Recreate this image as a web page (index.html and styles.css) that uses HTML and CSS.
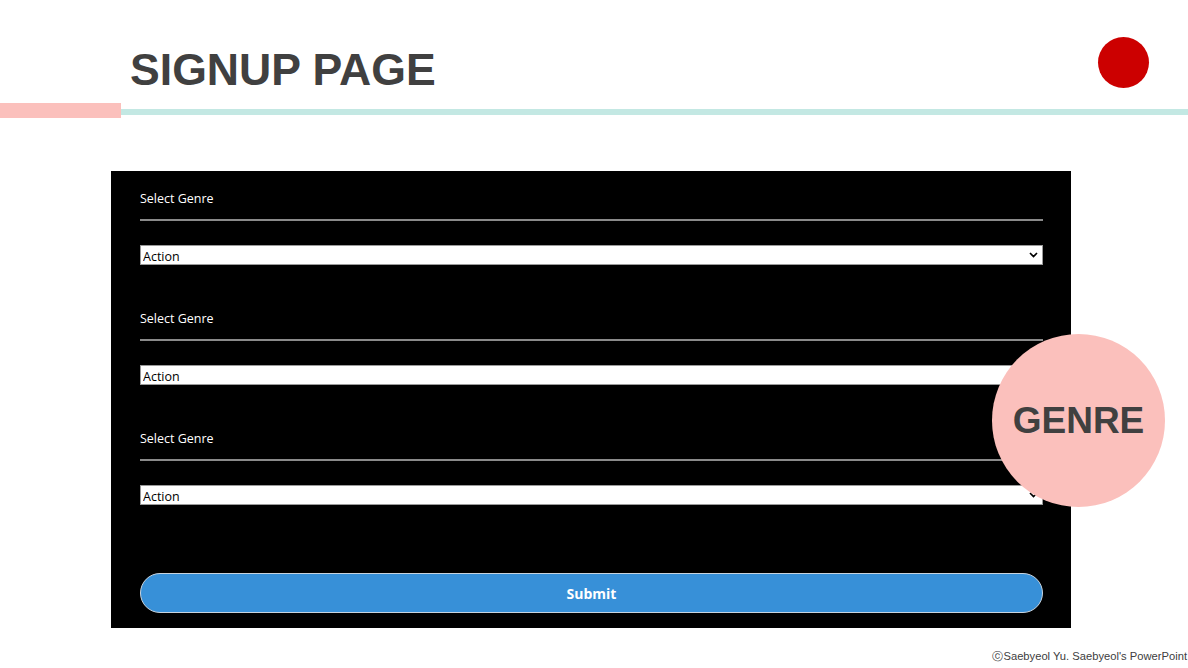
FILE: index.html
```html
<!DOCTYPE html>
<html lang="en">
<head>
<meta charset="utf-8">
<title>Signup Page</title>
<link rel="stylesheet" href="styles.css">
</head>
<body>
<div class="slide">
  <header class="header">
    <h1 class="title">SIGNUP PAGE</h1>
    <div class="dot"></div>
  </header>
  <div class="rule">
    <div class="rule-pink"></div>
    <div class="rule-teal"></div>
  </div>
  <form class="panel">
    <div class="field">
      <label class="field-label">Select Genre</label>
      <div class="field-line"></div>
      <div class="select-wrap">
        <select class="select"><option>Action</option></select>
        <svg class="chev" width="9" height="6" viewBox="0 0 9 6"><path d="M1 1 L4.5 4.5 L8 1" fill="none" stroke="#000" stroke-width="1.7"/></svg>
      </div>
    </div>
    <div class="field">
      <label class="field-label">Select Genre</label>
      <div class="field-line"></div>
      <div class="select-wrap">
        <select class="select"><option>Action</option></select>
        <svg class="chev" width="9" height="6" viewBox="0 0 9 6"><path d="M1 1 L4.5 4.5 L8 1" fill="none" stroke="#000" stroke-width="1.7"/></svg>
      </div>
    </div>
    <div class="field">
      <label class="field-label">Select Genre</label>
      <div class="field-line"></div>
      <div class="select-wrap">
        <select class="select"><option>Action</option></select>
        <svg class="chev" width="9" height="6" viewBox="0 0 9 6"><path d="M1 1 L4.5 4.5 L8 1" fill="none" stroke="#000" stroke-width="1.7"/></svg>
      </div>
    </div>
    <button type="button" class="submit">Submit</button>
  </form>
  <footer class="footer">ⓒSaebyeol Yu. Saebyeol's PowerPoint</footer>
  <div class="badge">GENRE</div>
</div>
</body>
</html>
```

FILE: styles.css
```css
* { box-sizing: border-box; }
html, body { margin: 0; padding: 0; background: #fff; }
.slide {
  position: relative;
  width: 1188px;
  height: 668px;
  overflow: hidden;
  font-family: "Liberation Sans", Arial, sans-serif;
}
.header {
  display: flex;
  align-items: flex-start;
  height: 103px;
  padding-left: 130px;
}
.title {
  margin: 48px 0 0 0;
  font-size: 44.6px;
  line-height: 44px;
  font-weight: 700;
  color: #404040;
  font-family: "Liberation Sans", Arial, sans-serif;
}
.dot {
  margin: 37px 39px 0 auto;
  width: 51px;
  height: 51px;
  border-radius: 50%;
  background: #cc0000;
}
.rule {
  display: flex;
  height: 15px;
}
.rule-pink {
  width: 121px;
  height: 15px;
  background: #fbc0bc;
}
.rule-teal {
  flex: 1;
  height: 6px;
  margin-top: 6px;
  background: #c3e8e3;
}
.panel {
  margin: 53px 0 0 111px;
  width: 960px;
  height: 457px;
  background: #000;
  padding: 19px 28px 15px 29px;
  display: flex;
  flex-direction: column;
  font-family: "Open Sans", "Noto Sans", sans-serif;
}
.field {
  display: flex;
  flex-direction: column;
  margin-bottom: 46px;
}
.field:last-of-type { margin-bottom: 69px; }
.field-label {
  color: #fff;
  font-size: 12.5px;
  line-height: 18px;
}
.field-line {
  height: 2px;
  background: #8a8a8a;
  margin-top: 11px;
  margin-bottom: 23px;
}
.select-wrap {
  position: relative;
  height: 20px;
}
.select {
  appearance: none;
  -webkit-appearance: none;
  width: 100%;
  height: 20px;
  border: 1px solid #9a9a9a;
  border-radius: 0;
  background: #fff;
  color: #000;
  font-family: "Open Sans", "Noto Sans", sans-serif;
  font-size: 12.5px;
  line-height: 18px;
  padding: 2px 0 0 2px;
  margin: 0;
}
.chev {
  position: absolute;
  right: 5px;
  top: 8px;
}
.submit {
  height: 41px;
  width: 100%;
  border-radius: 21px;
  border: 1px solid #c8d4df;
  background: #3790d8;
  color: #fff;
  font-family: "Open Sans", "Noto Sans", sans-serif;
  font-weight: 700;
  font-size: 14px;
  padding: 0;
  cursor: pointer;
}
.footer {
  margin-top: 22px;
  text-align: right;
  padding-right: 1px;
  font-size: 11.2px;
  line-height: 13px;
  color: #404040;
}
.badge {
  position: absolute;
  left: 992px;
  top: 334px;
  width: 173px;
  height: 173px;
  border-radius: 50%;
  background: #fbc0bc;
  display: flex;
  align-items: center;
  justify-content: center;
  color: #404040;
  font-weight: 700;
  font-size: 37px;
  padding-top: 1px;
}
```
